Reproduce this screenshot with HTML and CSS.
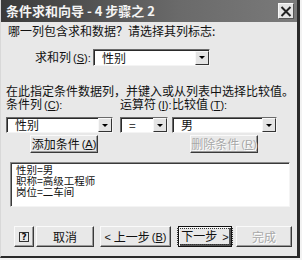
FILE: index.html
```html
<!DOCTYPE html>
<html>
<head>
<meta charset="utf-8">
<link rel="stylesheet" href="styles.css">
</head>
<body>
<div class="win">
  <div class="title">
    <span class="title-text">条件求和向导 - 4 步骤之 2</span>
    <span class="close"><svg width="12" height="11" viewBox="0 0 12 11"><path d="M1.5 1 L10.5 10 M10.5 1 L1.5 10" stroke="#222" stroke-width="2" fill="none"/></svg></span>
  </div>
  <div class="content">
    <div class="q">哪一列包含求和数据？请选择其列标志:</div>
    <div class="sum-row">
      <span class="lbl">求和列<span class="k">(<u>S</u>):</span></span>
      <div class="sel sel-sum"><span class="val">性别</span><span class="arr"><i></i></span></div>
    </div>
    <div class="hint">在此指定条件数据列，并键入或从列表中选择比较值。</div>
    <div class="cond">
      <span class="lbl">条件列<span class="k">(<u>C</u>):</span></span>
      <span class="lbl">运算符<span class="k">(<u>I</u>):</span></span>
      <span class="lbl">比较值<span class="k">(<u>T</u>):</span></span>
      <div class="sel sel-col"><span class="val">性别</span><span class="arr"><i></i></span></div>
      <div class="sel sel-op"><span class="val">=</span><span class="arr"><i></i></span></div>
      <div class="sel sel-cmp"><span class="val">男</span><span class="arr"><i></i></span></div>
    </div>
    <div class="act-row">
      <span class="btn btn-add">添加条件<span class="k">(<u>A</u>)</span></span>
      <span class="btn btn-del dis">删除条件<span class="k">(<u>R</u>)</span></span>
    </div>
    <div class="list">
      <div>性别=男</div>
      <div>职称=高级工程师</div>
      <div>岗位=二车间</div>
    </div>
    <div class="footer">
      <span class="btn b-help"><span class="qicon">?</span></span>
      <span class="btn b-cancel">取消</span>
      <span class="btn b-prev"><span class="k">&lt;</span>&nbsp;上一步<span class="k">(<u>B</u>)</span></span>
      <span class="btn b-next"><span class="focus">下一步<span class="k">&nbsp;&gt;</span></span></span>
      <span class="btn b-done dis">完成</span>
    </div>
  </div>
</div>
</body>
</html>
```

FILE: styles.css
```css
* { box-sizing: border-box; }
html, body {
  margin: 0;
  padding: 0;
  background: #f2f2f2;
  font-family: "Noto Sans CJK SC", "Noto Sans", sans-serif;
  font-size: 12px;
  color: #111;
}
.k {
  font-family: "Liberation Sans", sans-serif;
  font-size: 11px;
  margin-left: 2px;
}
.win {
  width: 300px;
  height: 258px;
  background: #e8e8e8;
  border-left: 1px solid #d8d8d8;
  border-right: 3px solid #2a2a2a;
  border-bottom: 2px solid #2a2a2a;
  overflow: hidden;
}
.title {
  height: 22px;
  background: linear-gradient(to right, #3a3a3a, #6a6a6a 60%, #7a7a7a);
  display: flex;
  align-items: center;
  justify-content: space-between;
  padding: 0 3px 0 5px;
}
.title-text {
  color: #f4f4f4;
  font-weight: bold;
  font-size: 13px;
  line-height: 16px;
}
.close {
  width: 16px;
  height: 16px;
  background: #e4e4e4;
  border: 1px solid #f8f8f8;
  border-right-color: #555;
  border-bottom-color: #555;
  display: flex;
  align-items: center;
  justify-content: center;
}
.content {
  padding: 2px 0 0 4px;
  display: flex;
  flex-direction: column;
}
.q {
  line-height: 14px;
  margin-left: 3px;
}
.lbl { line-height: 13px; white-space: nowrap; }
.sum-row {
  display: flex;
  align-items: center;
  margin-top: 11px;
  padding-left: 30px;
}
.sum-row .lbl { width: 58px; }
.sel {
  height: 16px;
  background: #fff;
  border: 1px solid #6a6a6a;
  border-right-color: #f4f4f4;
  border-bottom-color: #f4f4f4;
  box-shadow: inset 1px 1px 0 #2a2a2a;
  display: flex;
  align-items: center;
  justify-content: space-between;
  padding-left: 8px;
}
.sel .val { line-height: 12px; }
.arr {
  width: 14px;
  height: 14px;
  background: #e4e4e4;
  border: 1px solid #f8f8f8;
  border-right-color: #333;
  border-bottom-color: #333;
  display: flex;
  align-items: center;
  justify-content: center;
}
.arr i {
  width: 0;
  height: 0;
  border-left: 3px solid transparent;
  border-right: 3px solid transparent;
  border-top: 3px solid #000;
}
.sel-sum { width: 117px; height: 17px; }
.hint {
  margin-top: 18px;
  line-height: 13px;
  margin-left: 1px;
}
.cond {
  display: grid;
  grid-template-columns: 114px 52px 105px;
  row-gap: 5px;
  margin-left: 1px;
}
.sel-col { width: 107px; }
.sel-op { width: 48px; }
.sel-cmp { width: 105px; }
.act-row {
  display: flex;
  margin-top: 2px;
  padding-left: 25px;
}
.btn {
  height: 18px;
  background: #e8e8e8;
  border: 1px solid #fafafa;
  border-right-color: #3a3a3a;
  border-bottom-color: #3a3a3a;
  box-shadow: inset -1px -1px 0 #9a9a9a;
  display: flex;
  align-items: center;
  justify-content: center;
  line-height: 12px;
  white-space: nowrap;
}
.dis { color: #a8a8a8; text-shadow: 1px 1px 0 #fff; }
.btn-add { width: 68px; }
.btn-del { width: 68px; margin-left: 92px; }
.list {
  margin: 9px 0 0 5px;
  width: 280px;
  height: 45px;
  background: #fff;
  border: 1px solid #8a8a8a;
  border-right-color: #f4f4f4;
  border-bottom-color: #f4f4f4;
  box-shadow: inset 1px 1px 0 #3a3a3a;
  padding: 1px 0 0 5px;
  font-size: 10.5px;
  line-height: 11px;
}
.footer {
  display: flex;
  margin-top: 19px;
  padding-left: 9px;
}
.footer .btn { height: 21px; }
.b-help { width: 20px; }
.qicon {
  width: 10px;
  height: 10px;
  border: 1px solid #333;
  font-size: 9px;
  line-height: 8px;
  font-weight: bold;
  text-align: center;
  font-family: "DejaVu Sans", sans-serif;
}
.b-cancel { width: 58px; margin-left: 2px; }
.b-prev { width: 71px; margin-left: 6px; }
.b-prev .k:first-child { margin-left: 0; }
.b-next {
  width: 54px;
  margin-left: 7px;
  border: 1px solid #111;
  box-shadow: inset 1px 1px 0 #fafafa, inset -2px -2px 0 #555;
}
.focus {
  border: 1px dotted #333;
  padding: 0 3px;
  line-height: 13px;
}
.b-done { width: 56px; margin-left: 4px; }
```
